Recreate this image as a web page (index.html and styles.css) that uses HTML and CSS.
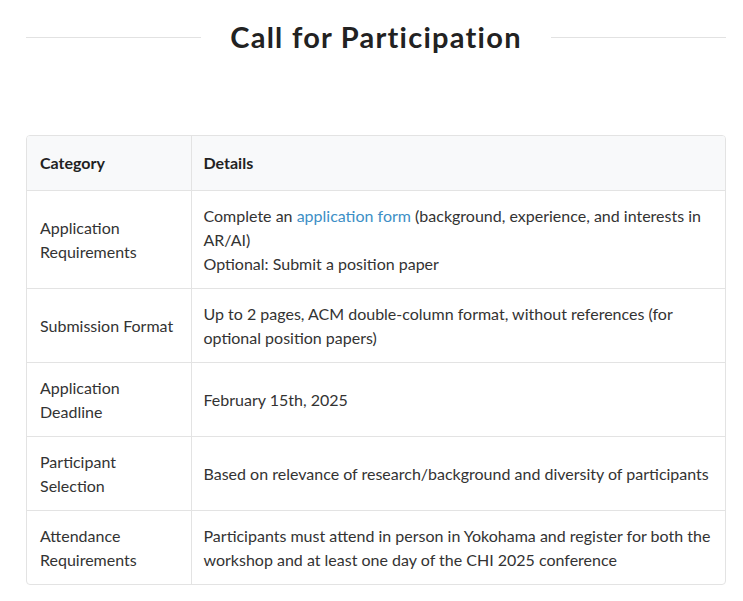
FILE: index.html
```html
<!DOCTYPE html>
<html>
<head>
<meta charset="utf-8">
<link rel="stylesheet" href="styles.css">
</head>
<body>
<section class="section">
  <div class="heading">
    <span class="rule"></span>
    <h2 class="title">Call for Participation</h2>
    <span class="rule"></span>
  </div>
  <div class="table-wrap">
    <table class="info">
      <thead>
        <tr><th class="cat">Category</th><th>Details</th></tr>
      </thead>
      <tbody>
        <tr>
          <td class="cat">Application Requirements</td>
          <td>Complete an <a href="#" class="link">application form</a> (background, experience, and interests in AR/AI)<br>Optional: Submit a position paper</td>
        </tr>
        <tr>
          <td class="cat">Submission Format</td>
          <td>Up to 2 pages, ACM double-column format, without references (for optional position papers)</td>
        </tr>
        <tr>
          <td class="cat">Application Deadline</td>
          <td>February 15th, 2025</td>
        </tr>
        <tr>
          <td class="cat">Participant Selection</td>
          <td>Based on relevance of research/background and diversity of participants</td>
        </tr>
        <tr>
          <td class="cat">Attendance Requirements</td>
          <td>Participants must attend in person in Yokohama and register for both the workshop and at least one day of the CHI 2025 conference</td>
        </tr>
      </tbody>
    </table>
  </div>
</section>
</body>
</html>
```
FILE: styles.css
```css
* { box-sizing: border-box; }
body {
  margin: 0;
  background: #fff;
  font-family: Lato, "Liberation Sans", sans-serif;
  color: #333;
}
.section {
  padding: 15px 17px 0 26px;
}
.heading {
  display: flex;
  align-items: center;
  gap: 29px;
  height: 44px;
}
.rule {
  flex: 1;
  height: 1px;
  background: #e2e2e2;
}
.title {
  margin: 0;
  font-size: 29px;
  font-weight: 700;
  letter-spacing: 1.25px;
  color: #222;
  line-height: 44px;
}
.table-wrap {
  margin-top: 76px;
  border: 1px solid #e3e3e3;
  border-radius: 4px;
  overflow: hidden;
}
.info {
  width: 100%;
  border-collapse: collapse;
  font-size: 16px;
  line-height: 24px;
}
.info th, .info td {
  text-align: left;
  vertical-align: middle;
  padding: 12.5px 10px 12.5px 12px;
  border-top: 1px solid #e3e3e3;
}
.info th {
  border-top: 0;
  background: #f8f9fa;
  font-weight: 700;
  padding: 15px 10px 15px 12px;
  color: #222;
}
.info .cat {
  width: 164px;
  padding-left: 13px;
  border-right: 1px solid #e3e3e3;
}
.link {
  color: #3d8fc6;
  text-decoration: none;
}
```
